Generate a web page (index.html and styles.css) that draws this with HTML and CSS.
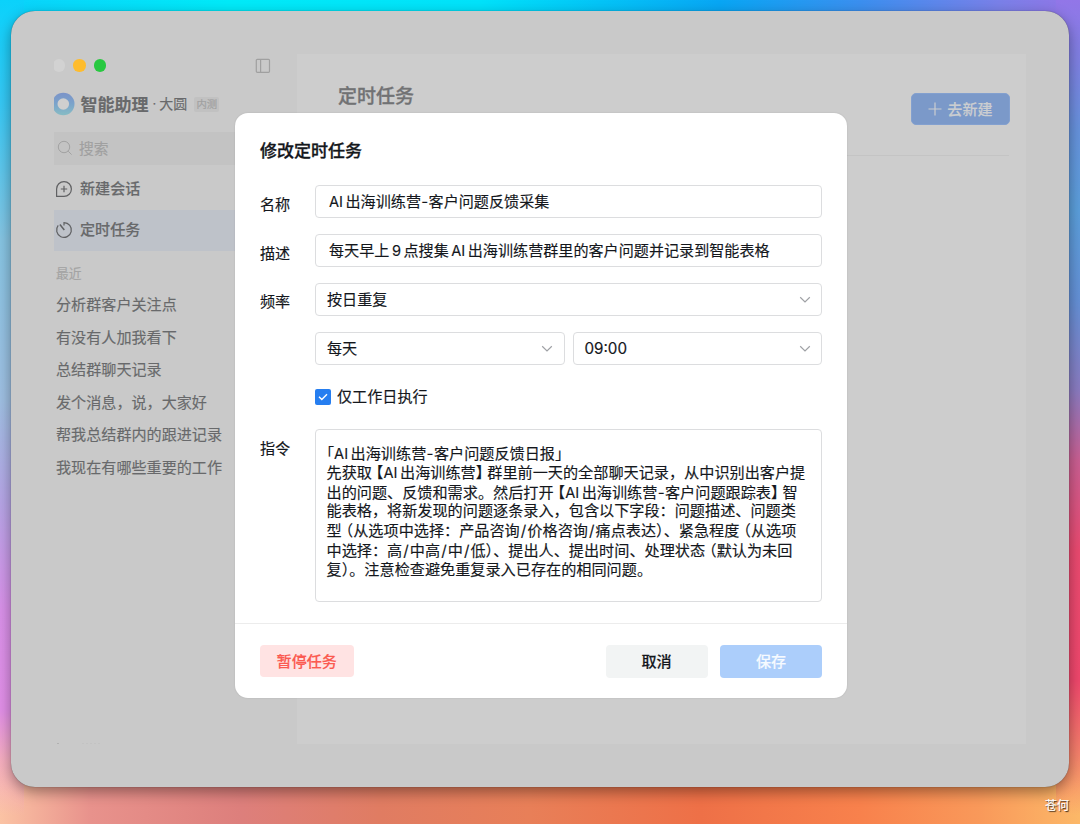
FILE: index.html
```html
<!DOCTYPE html>
<html lang="zh-CN">
<head>
    <meta charset="utf-8">
    <title>定时任务</title>
    <link rel="stylesheet" href="styles.css">
</head>
<body>
    <div class="window">
        <!-- 侧边栏 -->
        <aside class="sidebar">
            <div class="titlebar">
                <span class="light light-off"></span>
                <span class="light light-yellow"></span>
                <span class="light light-green"></span>
                <svg class="toggle" width="16" height="16" viewBox="0 0 16 16" fill="none" stroke="#a0a0a0" stroke-width="1.2">
                    <rect x="1.3" y="1.3" width="13.2" height="13" rx="1"/>
                    <path d="M5.6 1.3v13"/>
                </svg>
            </div>
            <div class="brand">
                <svg class="logo" width="22" height="24" viewBox="0 0 22 24">
                    <defs>
                        <linearGradient id="ring" x1="0" y1="0" x2="0" y2="1">
                            <stop offset="0" stop-color="#7b93c8"/>
                            <stop offset="0.5" stop-color="#7ba4cb"/>
                            <stop offset="1" stop-color="#87bcc4"/>
                        </linearGradient>
                    </defs>
                    <circle cx="9.3" cy="12" r="11.2" fill="url(#ring)"/>
                    <circle cx="9.3" cy="12" r="5.8" fill="#cfcfcf"/>
                </svg>
                <b class="brand-name">智能助理</b>
                <span class="brand-dot">·</span>
                <span class="brand-user">大圆</span>
                <span class="tag">内测</span>
            </div>
            <div class="search">
                <svg width="16" height="16" viewBox="0 0 16 16" fill="none" stroke="#a2a2a2" stroke-width="1">
                    <circle cx="7" cy="7" r="5.7"/>
                    <path d="M11.2 11.2L14.6 14.6"/>
                </svg>
                <span>搜索</span>
            </div>
            <nav class="menu">
                <div class="menu-item">
                    <svg width="18" height="18" viewBox="0 0 18 18" fill="none" stroke="#606163" stroke-width="1.2">
                        <path d="M1.6 16.4V9A7.4 7.4 0 1 1 9 16.4z" stroke-linejoin="round"/>
                        <path d="M9 5.8v6.4M5.8 9h6.4"/>
                    </svg>
                    <span>新建会话</span>
                </div>
                <div class="menu-item active">
                    <svg width="18" height="18" viewBox="0 0 18 18" fill="none" stroke="#606163" stroke-width="1.2">
                        <path d="M9 4.4V1.6A7.4 7.4 0 1 1 3.2 4.4"/>
                        <path d="M4.9 3.5l4.4 5.5" stroke-width="1.5"/>
                    </svg>
                    <span>定时任务</span>
                </div>
            </nav>
            <div class="recent-title">最近</div>
            <ul class="recent">
                <li>分析群客户关注点</li>
                <li>有没有人加我看下</li>
                <li>总结群聊天记录</li>
                <li>发个消息，说，大家好</li>
                <li>帮我总结群内的跟进记录</li>
                <li>我现在有哪些重要的工作</li>
            </ul>
            <svg class="cut" width="52" height="2" viewBox="0 0 52 2" fill="none" stroke="#bdbdbd">
                <path d="M3 1h2" stroke="#999"/>
                <path d="M28 1h20" stroke-dasharray="2 2"/>
            </svg>
        </aside>

        <!-- 主内容 -->
        <main class="content">
            <header class="content-header">
                <h1>定时任务</h1>
                <button class="btn-new" type="button">
                    <svg width="14" height="14" viewBox="0 0 14 14" stroke="#cbcdd0" stroke-width="1.2">
                        <path d="M7 .5v13M.5 7h13"/>
                    </svg>
                    <span>去新建</span>
                </button>
            </header>
        </main>
    </div>

    <!-- 修改任务弹窗 -->
    <div class="modal">
        <div class="modal-body">
            <h2>修改定时任务</h2>
            <div class="row">
                <label>名称</label>
                <div class="field input"><span class="en">AI</span>出海训练营<span class="dash">-</span>客户问题反馈采集</div>
            </div>
            <div class="row">
                <label>描述</label>
                <div class="field input">每天早上<span class="en num">9</span>点搜集<span class="en num">AI</span>出海训练营群里的客户问题并记录到智能表格</div>
            </div>
            <div class="row row-freq">
                <label>频率</label>
                <div class="field select">
                    <span>按日重复</span>
                    <svg width="12" height="8" viewBox="0 0 12 8"><path d="M1.2 1.3L6 6l4.8-4.7"/></svg>
                </div>
            </div>
            <div class="row">
                <label></label>
                <div class="field select half">
                    <span>每天</span>
                    <svg width="12" height="8" viewBox="0 0 12 8"><path d="M1.2 1.3L6 6l4.8-4.7"/></svg>
                </div>
                <div class="field select half">
                    <span class="time">09:00</span>
                    <svg width="12" height="8" viewBox="0 0 12 8"><path d="M1.2 1.3L6 6l4.8-4.7"/></svg>
                </div>
            </div>
            <div class="row row-check">
                <label></label>
                <span class="checkbox">
                    <svg width="10" height="8" viewBox="0 0 10 8" fill="none" stroke="#fff" stroke-width="1.4"><path d="M1 3.8l2.8 2.7L9 1.2"/></svg>
                </span>
                <span class="check-text">仅工作日执行</span>
            </div>
            <div class="row row-text">
                <label>指令</label>
                <div class="field textarea">
                    <p><i>「</i><span class="en">AI</span>出海训练营<span class="dash">-</span>客户问题反馈日报<i>」</i></p>
                    <p>先获取<i class="l">【</i><span class="en">AI</span>出海训练营<i class="r">】</i>群里前一天的全部聊天记录，从中识别出客户提</p>
                    <p>出的问题、反馈和需求。然后打开<i class="l">【</i><span class="en">AI</span>出海训练营<span class="dash">-</span>客户问题跟踪表<i class="r">】</i>智</p>
                    <p>能表格，将新发现的问题逐条录入，包含以下字段：问题描述、问题类</p>
                    <p>型<i class="l">（</i>从选项中选择：产品咨询<span class="slash">/</span>价格咨询<span class="slash">/</span>痛点表达<i>）</i>、紧急程度<i class="l">（</i>从选项</p>
                    <p>中选择：高<span class="slash">/</span>中高<span class="slash">/</span>中<span class="slash">/</span>低<i>）</i>、提出人、提出时间、处理状态<i class="l">（</i>默认为未回</p>
                    <p>复<i>）</i>。注意检查避免重复录入已存在的相同问题。</p>
                </div>
            </div>
        </div>
        <footer class="modal-footer">
            <button class="btn btn-pause" type="button">暂停任务</button>
            <button class="btn btn-cancel" type="button">取消</button>
            <button class="btn btn-save" type="button">保存</button>
        </footer>
    </div>

    <div class="watermark">苍何</div>
</body>
</html>
```
FILE: styles.css
```css
* {
    box-sizing: border-box;
}

body {
    margin: 0;
    padding: 11px;
    width: 1080px;
    height: 824px;
    overflow: hidden;
    position: relative;
    font-family: Inter, "Noto Sans CJK SC", sans-serif;
    font-size: 15.1px;
    -webkit-text-stroke: 0.15px currentColor;
    text-autospace: no-autospace;
    text-spacing-trim: space-all;
    background:
        linear-gradient(#0ad2fb 0, #35c8f5 100px, #86c4e2 240px, #9fbfe2 400px, #b5a5e5 500px, #d890e8 610px, #e08ee6 710px, rgba(240, 160, 210, 0.6) 760px, rgba(252, 195, 164, 0) 815px) 0 0 / 24px 824px no-repeat,
        linear-gradient(#9276e8 0, #7f80e2 60px, #6692dc 130px, #5b9fdb 210px, #6490d6 300px, #8a7bc0 390px, #c95f92 460px, #ea4a70 550px, #ef476c 680px, rgba(240, 100, 108, 0.7) 750px, rgba(252, 184, 104, 0) 815px) right 0 top 0 / 24px 824px no-repeat,
        linear-gradient(90deg, #0ad2fb 0, #00eaf8 230px, #00e2fa 480px, #08a6f4 720px, #3b8fef 860px, #7a80e8 1000px, #9474e6 1080px) 0 0 / 1080px 30px no-repeat,
        linear-gradient(90deg, #fbc3a4 0, #e8928c 90px, #dd7f7c 240px, #e07c62 380px, #e87f58 530px, #ee7047 700px, #f8814c 860px, #f9995a 980px, #fcb868 1080px);
}

/* 窗口 */
.window {
    display: flex;
    width: 1058px;
    height: 776px;
    padding: 43px;
    border-radius: 24px;
    background-color: #c9c9c9;
    box-shadow: 0 0 1px rgba(0, 0, 0, 0.5), 0 5px 14px rgba(0, 0, 0, 0.38);
}

/* 侧边栏 */
.sidebar {
    width: 243px;
    color: #68696b;
    overflow: hidden;
    position: relative;
}

.titlebar {
    display: flex;
    align-items: center;
    height: 23px;
    gap: 8px;
    padding-right: 26px;
    margin-left: -1px;
}

.light {
    width: 12.4px;
    height: 12.4px;
    border-radius: 50%;
}

.light-off {
    background-color: #d2d2d2;
}

.light-yellow {
    background-color: #febc2e;
}

.light-green {
    background-color: #28c840;
}

.toggle {
    margin-left: auto;
}

.brand {
    display: flex;
    align-items: center;
    height: 32px;
    margin-top: 10px;
}

.logo {
    margin-top: 2px;
}

.brand-name {
    margin-left: 4.5px;
    font-size: 17px;
}

.brand-dot {
    margin: 0 3px 0 4px;
    font-size: 13px;
}

.brand-user {
    font-size: 14px;
}

.tag {
    width: 25px;
    height: 15px;
    margin: 2px 0 0 7px;
    border-radius: 2px;
    background-color: #c1c1c1;
    color: #a0a0a0;
    font-size: 10.3px;
    line-height: 15px;
    text-align: center;
}

.search {
    display: flex;
    align-items: center;
    height: 33px;
    margin-top: 13px;
    padding: 0 0 1px 3px;
    gap: 6px;
    background-color: #c3c3c3;
    color: #a0a0a0;
    font-size: 14.8px;
}

.search span {
    padding-bottom: 1px;
}

.menu {
    padding-top: 4px;
}

.menu-item {
    display: flex;
    align-items: center;
    height: 41px;
    padding: 0 0 2px 1px;
    gap: 7px;
    font-weight: 500;
}

.menu-item span {
    padding-bottom: 3px;
}

.menu-item.active {
    background-color: #bec2c9;
}

.recent-title {
    margin: 13px 0 5px 2px;
    color: #a3a3a3;
    font-size: 12.8px;
    line-height: 20px;
}

.recent {
    margin: 0;
    padding: 0 0 0 2px;
    list-style: none;
}

.recent li {
    height: 32.6px;
    line-height: 32.6px;
    white-space: nowrap;
}

.cut {
    position: absolute;
    left: 0;
    bottom: -1px;
}

/* 主内容 */
.content {
    flex: 1;
    padding: 0 17px 0 41px;
    background-color: #cdcdcd;
}

.content-header {
    display: flex;
    justify-content: space-between;
    height: 102px;
    margin-left: -24px;
    padding-left: 24px;
    border-bottom: 1px solid #c4c4c4;
}

.content-header h1 {
    margin: 28px 0 0;
    color: #717274;
    font-size: 19px;
    font-weight: 500;
    line-height: 30px;
    -webkit-text-stroke: 0.3px #717274;
}

.btn-new {
    display: flex;
    align-items: center;
    justify-content: center;
    gap: 5px;
    width: 99px;
    height: 32px;
    margin: 38.5px -1px 0 0;
    border: 1px solid #83a0cf;
    border-radius: 5px;
    background-color: #7b99c9;
    color: #cbcdd0;
    font: 500 15.1px Inter, "Noto Sans CJK SC", sans-serif;
}

.btn-new span {
    padding-bottom: 2px;
}

/* 弹窗 */
.modal {
    position: absolute;
    left: 235px;
    top: 113px;
    width: 611.5px;
    height: 584.5px;
    border-radius: 13px;
    background-color: #fff;
    color: #14171c;
    box-shadow: 0 0 2px rgba(0, 0, 0, 0.12);
}

.modal-body {
    height: 511px;
    padding: 24px 24.5px 0 25px;
    border-bottom: 1px solid #ececec;
}

.modal h2 {
    margin: 0 0 20px;
    font-size: 17px;
    font-weight: 500;
    line-height: 28px;
    -webkit-text-stroke: 0.3px #14171c;
}

.row {
    display: flex;
    height: 33px;
    margin-bottom: 16px;
}

.row label {
    width: 55px;
    padding-top: 8px;
    line-height: 24px;
}

.row-freq label {
    padding-top: 7px;
}

.field {
    flex: 1;
    border: 1px solid #dcdddf;
    border-radius: 4px;
    white-space: nowrap;
}

.input {
    padding: 0 13px;
    line-height: 31px;
}

.select {
    display: flex;
    align-items: center;
    justify-content: space-between;
    padding: 0 10.5px 0 11px;
}

.select span {
    padding-bottom: 3px;
}

.select .time {
    padding-bottom: 0;
    font-size: 15.2px;
}

.select svg {
    fill: none;
    stroke: #9fa1a5;
    stroke-width: 1.2;
}

.half + .half {
    margin-left: 8px;
}

.en {
    margin-right: 2.5px;
    font-size: 14.6px;
}

.en.num {
    margin-left: 2.5px;
}

.dash,
.slash {
    display: inline-block;
    width: 7.6px;
    text-align: center;
}

.row-check {
    align-items: center;
    margin-top: -1px;
}

.check-text {
    padding-bottom: 3px;
}

.checkbox {
    display: flex;
    align-items: center;
    justify-content: center;
    width: 16px;
    height: 16px;
    margin-right: 6px;
    border-radius: 2px;
    background-color: #267ef0;
}

.row-text {
    height: 173px;
    margin: 17px 0 0;
}

.row-text label {
    padding-top: 8px;
}

.row-check + .row-text {
    margin-top: -0.5px;
    padding-top: 0.5px;
}

.textarea {
    padding: 13px 0 0 10.5px;
    line-height: 19.35px;
    font-size: 15.15px;
}

.textarea p {
    margin: 0;
    height: 19.35px;
}

/* 半宽标点 */
.textarea i {
    font-style: normal;
    font-family: "Noto Sans CJK SC", sans-serif;
    font-feature-settings: "halt";
}

.textarea i,
.textarea .en {
    display: inline-block;
    height: 19px;
    line-height: 19px;
}

.textarea .l {
    margin-left: 4px;
}

.textarea .r {
    margin-right: 4px;
}

.modal-footer {
    display: flex;
    padding: 21px 24.5px 0 25px;
}

.btn {
    width: 102px;
    height: 32.5px;
    padding: 0 0 2px;
    border: none;
    border-radius: 4px;
    font: 500 15.1px Inter, "Noto Sans CJK SC", sans-serif;
}

.btn-pause {
    width: 93.5px;
    height: 31.5px;
    margin-right: auto;
    background-color: #ffe3e3;
    color: #fb5a50;
}

.btn-cancel {
    background-color: #f2f4f4;
    color: #14171c;
}

.btn-save {
    margin-left: 12.5px;
    background-color: #accefb;
    color: #f6faff;
}

.watermark {
    position: absolute;
    right: 11px;
    bottom: 9px;
    color: #fff;
    font-size: 12px;
    line-height: 18px;
    text-shadow: 1px 1px 1px rgba(0, 0, 0, 0.8);
}
```
